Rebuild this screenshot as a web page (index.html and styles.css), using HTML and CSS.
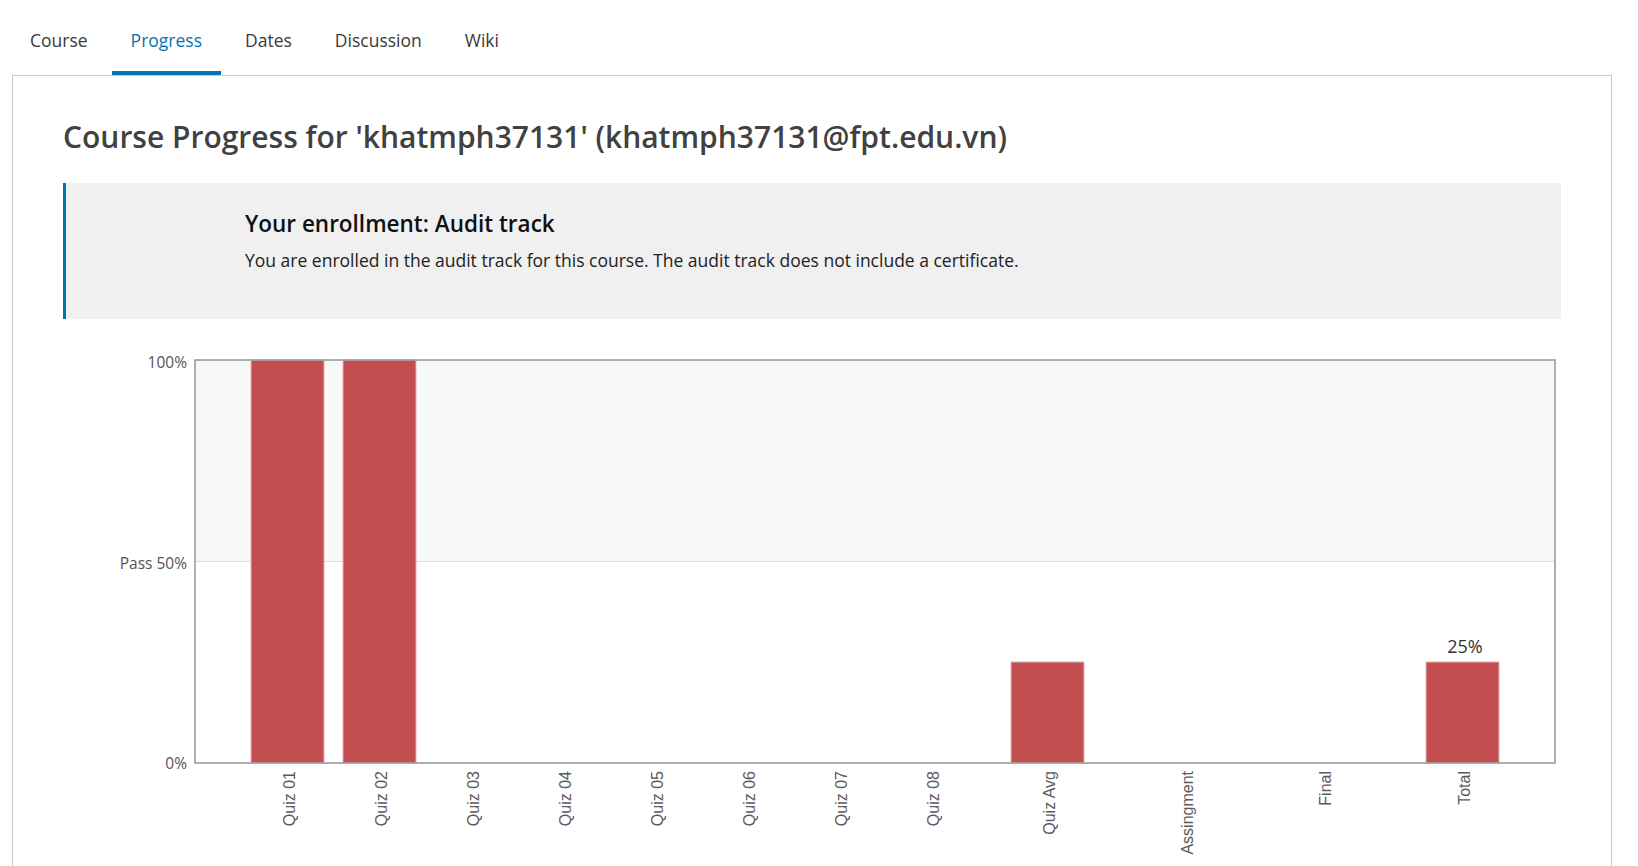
FILE: index.html
```html
<!DOCTYPE html>
<html lang="en">
<head>
<meta charset="utf-8">
<title>Course Progress</title>
<link rel="stylesheet" href="styles.css">
</head>
<body>
<nav class="tabs">
  <a class="tab" href="#">Course</a>
  <a class="tab active" href="#">Progress</a>
  <a class="tab" href="#">Dates</a>
  <a class="tab" href="#">Discussion</a>
  <a class="tab" href="#">Wiki</a>
</nav>
<main class="panel">
  <h1 class="title">Course Progress for 'khatmph37131' (khatmph37131@fpt.edu.vn)</h1>
  <section class="enroll">
    <h2 class="enroll-title">Your enrollment: Audit track</h2>
    <p class="enroll-text">You are enrolled in the audit track for this course. The audit track does not include a certificate.</p>
  </section>
  <div class="chart">
    <svg class="chart-svg" width="1498" height="536" viewBox="63 330 1498 536" xmlns="http://www.w3.org/2000/svg">
      <rect x="195" y="360" width="1360" height="201.5" fill="#f7f8fa"/>
      <rect x="195" y="561.5" width="1360" height="201.5" fill="#ffffff"/>
      <line x1="195" y1="561.5" x2="1555" y2="561.5" stroke="#dcdcdc" stroke-width="1"/>
      <g class="bars">
        <rect x="251" y="360" width="73" height="403"/>
        <rect x="343" y="360" width="73" height="403"/>
        <rect x="1011" y="662" width="73" height="101"/>
        <rect x="1426" y="662" width="73" height="101"/>
      </g>
      <rect x="195" y="360" width="1360" height="403" fill="none" stroke="#9c9c9c" stroke-width="1.6"/>
      <text class="value" x="1465" y="653" text-anchor="middle">25%</text>
      <g class="ylab">
        <text x="187" y="368" text-anchor="end">100%</text>
        <text x="187" y="568.5" text-anchor="end">Pass 50%</text>
        <text x="187" y="768.5" text-anchor="end">0%</text>
      </g>
      <g class="xlab">
        <text transform="translate(295,771) rotate(-90)" text-anchor="end">Quiz 01</text>
        <text transform="translate(387,771) rotate(-90)" text-anchor="end">Quiz 02</text>
        <text transform="translate(479,771) rotate(-90)" text-anchor="end">Quiz 03</text>
        <text transform="translate(571,771) rotate(-90)" text-anchor="end">Quiz 04</text>
        <text transform="translate(663,771) rotate(-90)" text-anchor="end">Quiz 05</text>
        <text transform="translate(755,771) rotate(-90)" text-anchor="end">Quiz 06</text>
        <text transform="translate(847,771) rotate(-90)" text-anchor="end">Quiz 07</text>
        <text transform="translate(939,771) rotate(-90)" text-anchor="end">Quiz 08</text>
        <text transform="translate(1055,771) rotate(-90)" text-anchor="end">Quiz Avg</text>
        <text transform="translate(1193,771) rotate(-90)" text-anchor="end">Assingment</text>
        <text transform="translate(1331,771) rotate(-90)" text-anchor="end">Final</text>
        <text transform="translate(1470,771) rotate(-90)" text-anchor="end">Total</text>
      </g>
    </svg>
  </div>
</main>
</body>
</html>
```

FILE: styles.css
```css
html, body {
  margin: 0;
  padding: 0;
  overflow: hidden;
  background: #ffffff;
}
body {
  font-family: "Open Sans", "Noto Sans", "Liberation Sans", sans-serif;
  color: #3c3c3c;
}
.tabs {
  display: flex;
  gap: 5px;
  padding-left: 11px;
}
.tab {
  display: block;
  padding: 28px 19px 19px;
  font-size: 17.5px;
  line-height: 24px;
  color: #3a3a3a;
  text-decoration: none;
  border-bottom: 4px solid transparent;
}
.tab.active {
  color: #0075b4;
  border-bottom-color: #0075b4;
}
.panel {
  margin-left: 12px;
  width: 1600px;
  box-sizing: border-box;
  border: 1px solid #c8c8c8;
  padding: 0 50px 40px;
}
.title {
  margin: 43px 0 0;
  font-size: 30px;
  line-height: 36px;
  font-weight: 600;
  color: #414141;
}
.enroll {
  margin-top: 28px;
  background: #f0f0f0;
  border-left: 3px solid #0075b4;
  padding: 26px 20px 47px 179px;
}
.enroll-title {
  margin: 0;
  font-size: 22.5px;
  line-height: 30px;
  font-weight: 600;
  color: #111111;
}
.enroll-text {
  margin: 9px 0 0;
  font-size: 17.5px;
  line-height: 24px;
  color: #222222;
}
.chart {
  margin-top: 11px;
}
.chart-svg {
  display: block;
  overflow: visible;
}
.bars rect {
  fill: #c44d4f;
  stroke: #e9b3b3;
  stroke-width: 1;
}
.value {
  font-family: "Open Sans", sans-serif;
  font-size: 18px;
  fill: #333333;
}
.ylab text {
  font-family: "Open Sans", sans-serif;
  font-size: 15.5px;
  fill: #555555;
}
.xlab text {
  font-family: "Liberation Sans", Arial, sans-serif;
  font-size: 16px;
  fill: #5a5a5a;
}
```
